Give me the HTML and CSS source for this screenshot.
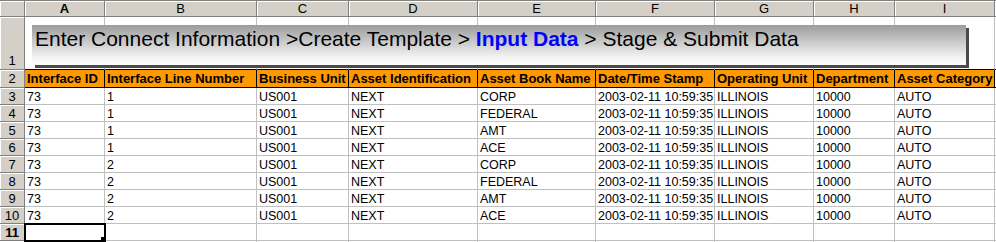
FILE: index.html
```html
<!DOCTYPE html>
<html lang="en">
  <head>
    <meta charset="UTF-8" />
    <title>Input Data</title>
    <link rel="stylesheet" href="styles.css">
  </head>
  <body>
    <div class="sheet" id="sheet">
      <div class="banner">
        Enter Connect Information &gt;Create Template &gt; <b class="current">Input Data</b> &gt; Stage &amp; Submit Data
      </div>
    </div>

    <script>
      const cols = ["A", "B", "C", "D", "E", "F", "G", "H", "I", ""];
      const fields = [
        "Interface ID",
        "Interface Line Number",
        "Business Unit",
        "Asset Identification",
        "Asset Book Name",
        "Date/Time Stamp",
        "Operating Unit",
        "Department",
        "Asset Category",
        ""
      ];
      const books = ["CORP", "FEDERAL", "AMT", "ACE"];
      const rows = [];
      [1, 2].forEach(function (line) {
        books.forEach(function (book) {
          rows.push(["73", line, "US001", "NEXT", book, "2003-02-11 10:59:35", "ILLINOIS", "10000", "AUTO", ""]);
        });
      });

      const sheet = document.getElementById("sheet");

      function addCell(cls, text) {
        let div = document.createElement("div");
        div.className = cls;
        div.textContent = text;
        sheet.appendChild(div);
        return div;
      }

      // column letters
      addCell("cell col-head corner", "");
      cols.forEach(function (c) {
        addCell("cell col-head" + (c === "A" ? " selected" : ""), c);
      });

      // row 1 holds the banner
      addCell("cell row-head tall", "1");
      cols.forEach(function () {
        addCell("cell above-fields", "");
      });

      // row 2 field names
      addCell("cell row-head", "2");
      fields.forEach(function (f, i) {
        addCell(i < 9 ? "cell field" : "cell above-fields", f);
      });

      // data rows
      rows.forEach(function (r, i) {
        addCell("cell row-head", i + 3);
        r.forEach(function (v) {
          addCell("cell", v);
        });
      });

      // empty row 11 (selected) and the edge of row 12
      [11, 12].forEach(function (n) {
        addCell("cell row-head" + (n === 11 ? " selected" : ""), n === 11 ? n : "");
        cols.forEach(function (c) {
          addCell(n === 11 && c === "A" ? "cell active" : "cell", "");
        });
      });
    </script>
  </body>
</html>
```

FILE: styles.css
```css
body {
  margin: 0;
  font-family: "Liberation Sans", Arial, sans-serif;
  background: white;
}
.sheet {
  position: relative;
  display: grid;
  grid-template-columns: 25px 80px 152px 92px 129px 118px 119px 99px 81px 100px 1fr;
  grid-template-rows: 17px 53px 18px repeat(10, 17px);
  width: 996px;
  height: 242px;
  overflow: hidden;
}
.cell {
  box-sizing: border-box;
  border-right: 1px solid #c0c0c0;
  border-bottom: 1px solid #c0c0c0;
  padding: 1px 0 0 2px;
  font-size: 12.5px;
  line-height: 16px;
  white-space: nowrap;
  overflow: hidden;
  color: black;
}
.col-head,
.row-head {
  background: #d4d0c8;
  border-color: #808080;
  box-shadow: inset 1px 1px 0 white;
  text-align: center;
  font-size: 13px;
  padding: 1px 0 0 0;
}
.col-head {
  border-top: 1px solid #808080;
  padding-top: 0;
}
.selected {
  font-weight: bold;
}
.row-head.tall {
  display: flex;
  align-items: flex-end;
  justify-content: center;
}
.above-fields {
  border-bottom-color: black;
}
.field {
  background: #ff9900;
  border-color: black;
  font-weight: bold;
  font-size: 13px;
}
.active {
  position: relative;
  outline: 2px solid black;
  outline-offset: -1px;
}
.active::after {
  content: "";
  position: absolute;
  right: -3px;
  bottom: -3px;
  width: 5px;
  height: 5px;
  background: black;
  border: 1px solid white;
}
.banner {
  position: absolute;
  left: 32px;
  top: 25px;
  width: 934px;
  height: 40px;
  box-sizing: border-box;
  padding: 2px 0 0 3px;
  background: linear-gradient(#9c9c9c, #f2f2f2 80%, white);
  box-shadow: 3px 3px 0 #4a4a4a;
  font-size: 21px;
  line-height: 24px;
  white-space: nowrap;
  z-index: 2;
}
.current {
  color: #0000ff;
}
```
